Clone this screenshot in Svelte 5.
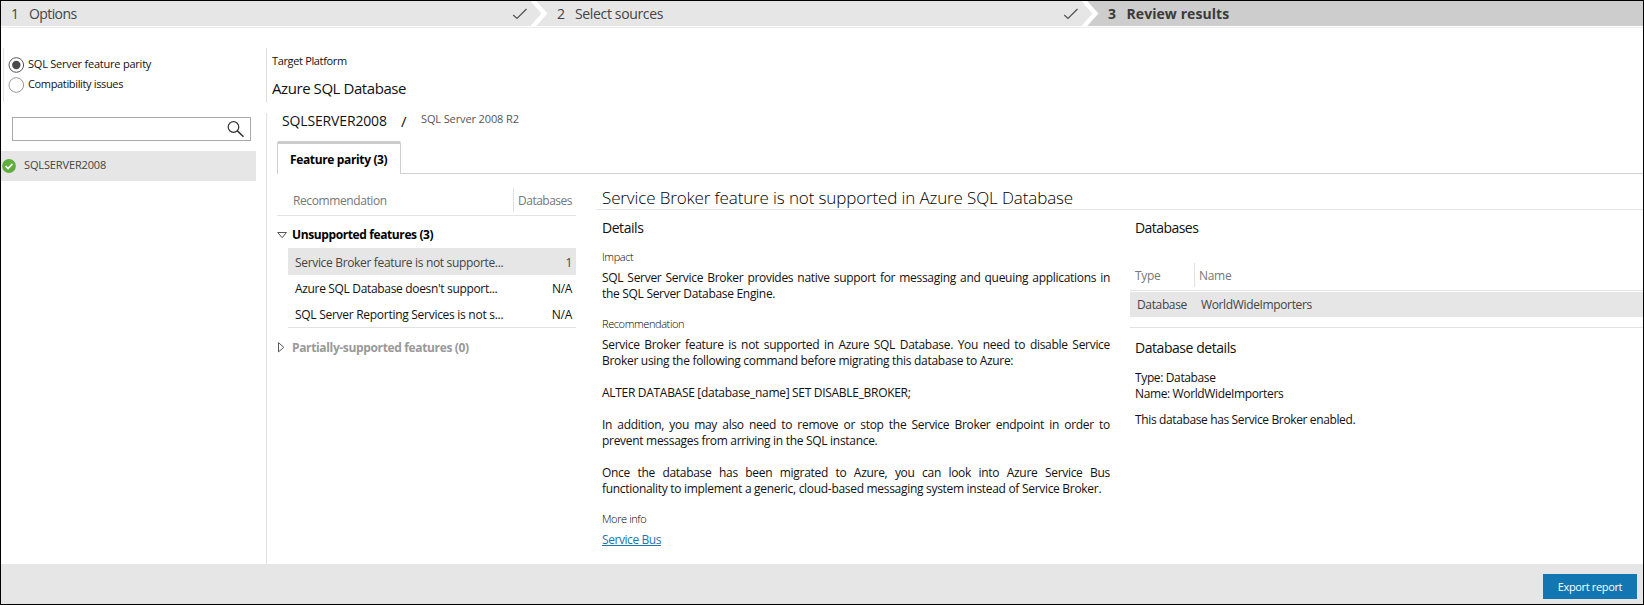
<script>
  const findings = [
    { text: 'Service Broker feature is not supporte...', count: '1', tone: 'selected' },
    { text: "Azure SQL Database doesn't support...", count: 'N/A', tone: 'second' },
    { text: 'SQL Server Reporting Services is not s...', count: 'N/A', tone: 'third' }
  ];
</script>

{#snippet check()}
  <svg class="check" width="16" height="12" viewBox="0 0 16 12"><path d="M1.2 7 L5 10.4 L14.5 1" fill="none" stroke="#505050" stroke-width="1.2" /></svg>
{/snippet}

{#snippet chevron(next)}
  <svg class="chevron" width="18" height="25" viewBox="0 0 18 25"><path d="M0 0 L13.5 12.5 L0 25 H18 V0 Z" fill={next} /><path d="M0.5 -2 L13.5 12.5 L0.5 27" fill="none" stroke="#fff" stroke-width="4.4" /></svg>
{/snippet}

<div class="app">
  <header>
    <div class="step one"><span class="num">1</span><span class="options">Options</span>{@render check()}</div>
    {@render chevron('#e6e6e6')}
    <div class="step two"><span class="num">2</span><span class="sources">Select sources</span>{@render check()}</div>
    {@render chevron('#cdcdcd')}
    <div class="step three"><span class="num">3</span><span>Review results</span></div>
  </header>

  <div class="body">
    <aside>
      <div class="modes">
        <div class="mode"><svg width="16" height="16" viewBox="0 0 16 16"><circle cx="8.3" cy="8" r="7.3" fill="#fff" stroke="#555" /><circle cx="8.3" cy="8" r="4.2" fill="#4a4a4a" /></svg><span class="parity">SQL Server feature parity</span></div>
        <div class="mode"><svg width="16" height="16" viewBox="0 0 16 16"><circle cx="8.3" cy="8" r="7.3" fill="#fff" stroke="#999" /></svg><span class="compat">Compatibility issues</span></div>
      </div>
      <div class="search">
        <svg width="18" height="18" viewBox="0 0 18 18" fill="none" stroke="#333"><circle cx="6.5" cy="6" r="5.3" stroke-width="1.2" /><path d="M10.4 9.9 L16.5 15.8" stroke-width="1.5" /></svg>
      </div>
      <div class="server">
        <svg width="14" height="14" viewBox="0 0 14 14"><circle cx="7" cy="7" r="6.9" fill="#5fae3d" /><path d="M3.6 7.2 L6 9.5 L10.4 4.9" fill="none" stroke="#fff" stroke-width="1.6" /></svg>
        <span>SQLSERVER2008</span>
      </div>
    </aside>

    <main>
      <section class="target">
        <div class="target-label">Target Platform</div>
        <div class="target-name">Azure SQL Database</div>
      </section>

      <section class="results">
        <div class="crumbs"><span class="instance">SQLSERVER2008</span><span class="slash">/</span><span class="version">SQL Server 2008 R2</span></div>
        <div class="tabs"><div class="tab">Feature parity (3)</div><div class="rest"></div></div>

        <div class="columns">
          <div class="list">
            <div class="list-head"><span class="rec">Recommendation</span><span class="dbs">Databases</span></div>
            <div class="group">
              <svg width="12" height="10" viewBox="0 0 12 10"><path d="M0.7 2.5 H9.5 L5.1 7.7 Z" fill="none" stroke="#555" /></svg>
              <span>Unsupported features (3)</span>
            </div>
            <div class="rows">
              {#each findings as f}
                <div class="row {f.tone}"><span>{f.text}</span><b>{f.count}</b></div>
              {/each}
            </div>
            <div class="group closed">
              <svg width="12" height="12" viewBox="0 0 12 12"><path d="M1.5 0.7 V9.9 L6.8 5.3 Z" fill="none" stroke="#555" /></svg>
              <span>Partially-supported features (0)</span>
            </div>
          </div>

          <div class="detail">
            <h1>Service Broker feature is not supported in Azure SQL Database</h1>
            <div class="split">
              <article>
                <h2 class="h-details">Details</h2>
                <h3 class="first">Impact</h3>
                <p>SQL Server Service Broker provides native support for messaging and queuing applications in the SQL Server Database Engine.</p>
                <h3>Recommendation</h3>
                <p>Service Broker feature is not supported in Azure SQL Database. You need to disable Service Broker using the following command before migrating this database to Azure:</p>
                <p class="gap">ALTER DATABASE [database_name] SET DISABLE_BROKER;</p>
                <p class="gap">In addition, you may also need to remove or stop the Service Broker endpoint in order to prevent messages from arriving in the SQL instance.</p>
                <p class="gap">Once the database has been migrated to Azure, you can look into Azure Service Bus functionality to implement a generic, cloud-based messaging system instead of Service Broker.</p>
                <h3 class="more">More info</h3>
                <a href="#service-bus">Service Bus</a>
              </article>

              <div class="objects">
                <h2 class="h-dbs">Databases</h2>
                <div class="obj-head"><span>Type</span><span class="name">Name</span></div>
                <div class="obj-row"><span>Database</span><span>WorldWideImporters</span></div>
                <div class="obj-info">
                  <h2>Database details</h2>
                  <div>Type: Database</div>
                  <div>Name: WorldWideImporters</div>
                  <div class="note">This database has Service Broker enabled.</div>
                </div>
              </div>
            </div>
          </div>
        </div>
      </section>
    </main>
  </div>

  <footer><button>Export report</button></footer>
</div>

<style>
  :global(body) { margin: 0; background: #fff; }
  .app { box-sizing: border-box; width: 1644px; height: 605px; border: 1px solid #000; display: flex; flex-direction: column; overflow: hidden; background: #fff; color: #111; font: 12px/16px "Open Sans", "Noto Sans", sans-serif; letter-spacing: -0.3px; }
  h1, h2, h3, p { margin: 0; font-weight: 400; }
  svg { display: block; flex: none; }

  header { display: flex; height: 25px; flex: none; border-bottom: 1px solid #fff; box-shadow: 0 1px 0 #ececec; color: #444; font-size: 14px; line-height: 25px; }
  .step { display: flex; box-sizing: border-box; background: #e6e6e6; }
  .one { width: 530px; padding-left: 10px; }
  .two { width: 533px; padding-left: 8px; }
  .three { flex: 1; padding-left: 8px; background: #cdcdcd; color: #3a3a3a; font-weight: 700; letter-spacing: 0.07px; }
  .num { width: 18px; }
  .three .num { width: 18.5px; }
  .options { letter-spacing: -0.6px; }
  .sources { letter-spacing: -0.35px; }
  .check { margin: 7px 3px 0 auto; }
  .chevron { background: #e6e6e6; }

  .body { flex: 1; display: flex; min-height: 0; padding-top: 21px; }
  aside { width: 265px; flex: none; }
  .modes { box-sizing: border-box; height: 54px; margin-left: 2px; padding: 9px 0 0 4px; border-left: 1px solid #e2e2e2; }
  .mode { display: flex; gap: 4px; height: 20px; font-size: 11px; line-height: 14px; }
  .parity { letter-spacing: -0.22px; }
  .compat { letter-spacing: -0.35px; }
  .search { box-sizing: border-box; width: 239px; height: 24px; margin: 15px 0 0 11px; border: 1px solid #a9a9a9; display: flex; justify-content: flex-end; padding: 3px 5px 0 0; }
  .server { display: flex; align-items: center; width: 255px; height: 30px; margin-top: 10px; background: #e6e6e6; color: #444; font-size: 11px; letter-spacing: -0.13px; }
  .server svg { margin: 0 8px 0 1px; }
  .server span { margin-top: -2px; }

  main { flex: 1; display: flex; flex-direction: column; gap: 11px; min-width: 0; }
  .target { box-sizing: border-box; height: 54px; flex: none; border-left: 1px solid #dedede; padding: 5px 0 0 5px; }
  .target-label { font-size: 11px; line-height: 16px; letter-spacing: -0.35px; }
  .target-name { margin-top: 9px; font-size: 15px; line-height: 20px; letter-spacing: -0.43px; }
  .results { flex: 1; min-height: 0; border-left: 1px solid #e2e2e2; padding-left: 10px; display: flex; flex-direction: column; }
  .crumbs { display: flex; height: 28px; padding-left: 5px; line-height: 16px; }
  .instance { width: 119px; font-size: 14px; line-height: 16px; letter-spacing: -0.15px; }
  .slash { width: 20px; font-size: 15px; }
  .version { font-size: 11px; line-height: 12px; color: #555; letter-spacing: -0.12px; }
  .tabs { display: flex; height: 33px; }
  .tab { box-sizing: border-box; width: 124px; border: 1px solid #cfcfcf; border-top: 3px solid #ccc; border-bottom: 0; border-radius: 2px 2px 0 0; padding: 8px 0 0 12px; font-weight: 700; color: #000; letter-spacing: -0.36px; white-space: nowrap; }
  .rest { flex: 1; border-bottom: 1px solid #d0d0d0; }

  .columns { display: flex; }
  .list { width: 299px; margin-right: 21px; flex: none; }
  .list-head { display: flex; box-sizing: border-box; height: 42px; padding-top: 14px; border-bottom: 1px solid #e4e4e4; color: #777; line-height: 26px; }
  .rec { box-sizing: border-box; width: 237px; height: 24px; padding-left: 16px; border-right: 1px solid #e2e2e2; letter-spacing: -0.4px; }
  .dbs { padding-left: 4px; letter-spacing: -0.5px; }
  .group { display: flex; align-items: center; gap: 3px; height: 16px; margin-top: 11px; font-weight: 700; color: #000; letter-spacing: -0.39px; }
  .rows { margin: 5px 0 0 11px; border-bottom: 1px solid #e2e2e2; }
  .row { display: flex; justify-content: space-between; height: 26px; padding: 0 4px 0 7px; line-height: 27px; letter-spacing: -0.33px; }
  .row b { font-weight: 400; }
  .row.selected { height: 27px; background: #e6e6e6; color: #444; line-height: 30px; }
  .row.second { line-height: 28px; }
  .row.third { line-height: 28px; letter-spacing: -0.28px; }
  .group.closed { color: #999; letter-spacing: -0.35px; margin-top: 12px; }

  .detail { flex: 1; min-width: 0; }
  .detail h1 { box-sizing: border-box; height: 36px; padding: 12px 0 0 5px; border-bottom: 1px solid #e4e4e4; color: #000; font-size: 17px; line-height: 24px; font-weight: 300; letter-spacing: -0.13px; }
  .split { display: flex; }
  article { width: 508px; margin-left: 5px; flex: none; }
  h2 { font-size: 14px; line-height: 20px; letter-spacing: -0.45px; }
  article h2, .objects > h2 { margin-top: 8px; }
  h3 { margin: 14px 0 5px; color: #000; font-size: 11px; line-height: 16px; font-weight: 300; letter-spacing: -0.4px; }
  h3.first { margin-top: 11px; }
  article p { text-align: justify; }
  article p.gap { margin-top: 16px; }
  article a { color: #1a75b0; letter-spacing: -0.43px; }
  .objects { flex: 1; margin-left: 20px; }
  .objects > h2 { padding-left: 5px; letter-spacing: -0.55px; }
  .obj-head { display: flex; box-sizing: border-box; height: 28px; margin-top: 25px; padding-left: 5px; border-bottom: 1px solid #e2e2e2; color: #777; line-height: 26px; }
  .obj-head span:first-child { box-sizing: border-box; width: 60px; height: 24px; border-right: 1px solid #e2e2e2; }
  .name { padding-left: 4px; }
  .obj-row { display: flex; height: 25px; margin-top: 1px; padding-left: 7px; background: #e6e6e6; color: #444; line-height: 25px; letter-spacing: -0.36px; }
  .obj-row span:first-child { width: 64px; }
  .obj-info { margin-top: 10px; padding: 10px 0 0 5px; border-top: 1px solid #e2e2e2; letter-spacing: -0.37px; }
  .obj-info h2 { margin-bottom: 12px; }
  .note { margin-top: 10px; }

  footer { display: flex; justify-content: flex-end; box-sizing: border-box; height: 40px; flex: none; padding: 10px 6px 0 0; background: #e6e6e6; }
  button { width: 94px; height: 25px; padding: 0; border: 0; background: #1176b1; color: #fff; font: 11px/25px "Open Sans", "Noto Sans", sans-serif; letter-spacing: -0.35px; }
</style>
